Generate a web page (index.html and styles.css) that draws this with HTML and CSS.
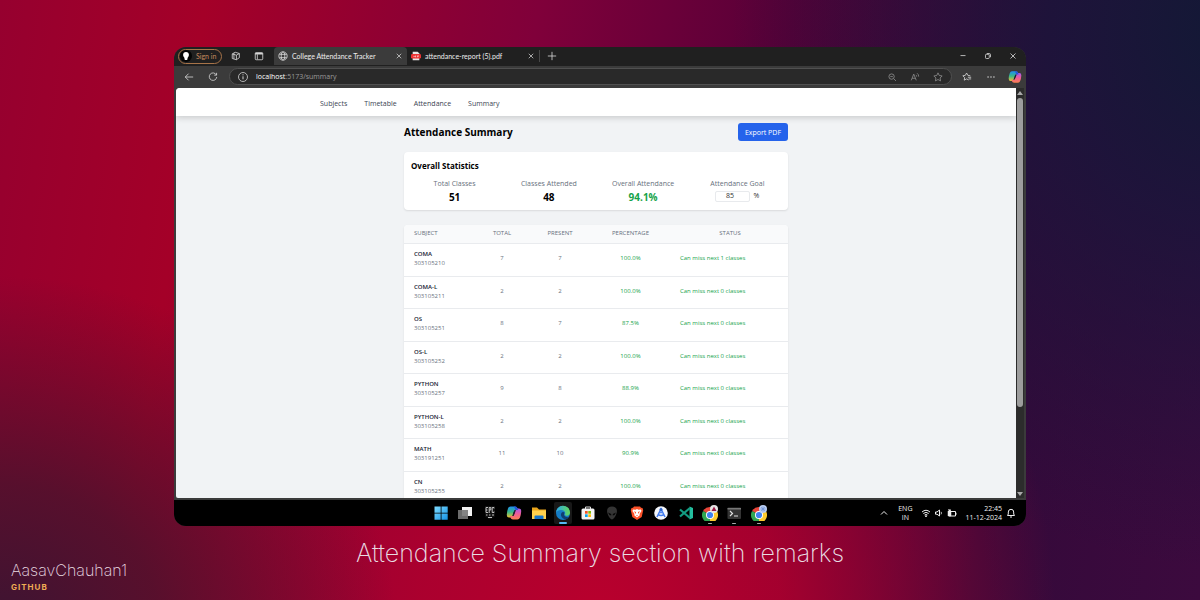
FILE: index.html
```html
<!DOCTYPE html>
<html lang="en">
<head>
<meta charset="utf-8">
<meta name="viewport" content="width=device-width, initial-scale=1">
<title>Attendance Summary section with remarks</title>
<link rel="stylesheet" href="styles.css">
</head>
<body class="stage">
<svg class="defs" aria-hidden="true">
  <defs>
    <linearGradient id="win" x1="0" y1="0" x2="1" y2="1"><stop offset="0" stop-color="#7fdcff"/><stop offset="1" stop-color="#1593e6"/></linearGradient>
    <linearGradient id="cpA" x1="0" y1="0" x2="0" y2="1"><stop offset="0" stop-color="#1f8ff0"/><stop offset=".5" stop-color="#38b889"/><stop offset="1" stop-color="#f2c230"/></linearGradient>
    <linearGradient id="cpB" x1="0" y1="0" x2="0" y2="1"><stop offset="0" stop-color="#a45af0"/><stop offset=".5" stop-color="#ee5c96"/><stop offset="1" stop-color="#fb8050"/></linearGradient>
    <linearGradient id="edgeA" x1="0" y1="0" x2="1" y2="0"><stop offset="0" stop-color="#2aa7e8"/><stop offset="1" stop-color="#63d95a"/></linearGradient>
    <symbol id="copilot" viewBox="0 0 16 16">
      <path d="M4.500 1.500H9q2 0 2.600 2l.4 1.500H9.500Q8.300 5 7.900 6.500L6.800 10.500Q6.200 12.500 4.200 12.500H3Q.6 12.500.8 9.500q.2-3.500 1.300-6.200.6-1.800 2.400-1.800z" fill="url(#cpA)"/>
      <path d="M11.500 14.500H7q-2 0-2.600-2L4 11h2.500q1.200 0 1.600-1.500l1.100-4q.6-2 2.600-2H13q2.400 0 2.200 3-.2 3.500-1.300 6.200-.6 1.800-2.400 1.800z" fill="url(#cpB)"/>
      <path d="M8.300 5.500 10 5 7.800 10.500 6.200 11z" fill="#1d2233"/>
      <path d="M8 1.500h1q2 0 2.600 2l.4 1.500H9.500z" fill="#2455d8"/>
    </symbol>
    <symbol id="chrome" viewBox="0 0 16 16">
      <path d="M8 8 1.070 4A8 8 0 0 1 14.930 4z" fill="#e8453a"/>
      <path d="M8 8 14.930 4A8 8 0 0 1 8 16z" fill="#fccb2f"/>
      <path d="M8 8v8A8 8 0 0 1 1.070 4z" fill="#30a652"/>
      <path d="M8 4h6.930L11.500 10 8 16 11 8z" fill="#fccb2f"/>
      <circle cx="8" cy="8" r="4" fill="#fff"/><circle cx="8" cy="8" r="3.100" fill="#3f83f0"/>
    </symbol>
    <symbol id="close" viewBox="0 0 8 8"><path d="M1 1l6 6M7 1 1 7" stroke="currentColor" fill="none"/></symbol>
    <symbol id="star" viewBox="0 0 12 12"><path d="M6 1l1.500 3.200 3.500.5-2.500 2.500.6 3.500L6 9l-3.100 1.700.6-3.500L1 4.700l3.500-.5z" fill="none" stroke="currentColor" stroke-linejoin="round"/></symbol>
  </defs>
</svg>

<main class="window">
  <header class="tabstrip">
    <button class="signin" type="button"><svg class="avatar" viewBox="0 0 12 12" aria-hidden="true"><circle cx="6" cy="6" r="6" fill="#050505"/><circle cx="6" cy="4.800" r="2.900" fill="#fff"/><path d="M4.200 7h3.600L7.200 10H4.800z" fill="#fff"/></svg>Sign in</button>
    <button class="icon-btn" type="button" aria-label="Workspaces"><svg viewBox="0 0 12 12"><g fill="none" stroke="currentColor"><path d="M1.500 3.500 5 1.500l5 1.500v5L6.500 10.500l-5-1.500zM1.500 3.500l5 1.500 3.500-2M6.500 5v5.500M3.500 2.500v7"/></g></svg></button>
    <button class="icon-btn" type="button" aria-label="Tab actions"><svg viewBox="0 0 12 12"><rect x="1.500" y="2" width="9" height="8.500" rx="1" fill="none" stroke="currentColor"/><path d="M1.500 3.200h9" stroke="currentColor" stroke-width="2"/><path d="M4 4v6" stroke="currentColor"/></svg></button>
    <div class="tab tab-active">
      <svg class="tab-icon" viewBox="0 0 12 12" aria-hidden="true"><g fill="none" stroke="#d5d5d5"><circle cx="6" cy="6" r="5"/><ellipse cx="6" cy="6" rx="2.200" ry="5"/><path d="M1.500 4h9M1.500 8h9"/></g></svg>
      <span class="tab-title">College Attendance Tracker</span>
      <button class="tab-close" type="button" aria-label="Close tab"><svg viewBox="0 0 8 8"><use href="#close"/></svg></button>
    </div>
    <div class="tab">
      <svg class="tab-icon" viewBox="0 0 12 12" aria-hidden="true"><path d="M3 1h5l2 2v8H2V1z" fill="#e9e5e5"/><rect x="0" y="3.500" width="12" height="5.500" rx="1.500" fill="#ed3434"/><path d="M3 6.500h1.500M5.500 5.500v2M8 5.500v2M8 6h1.500" stroke="#fff" stroke-width=".8"/></svg>
      <span class="tab-title">attendance-report (5).pdf</span>
      <button class="tab-close" type="button" aria-label="Close tab"><svg viewBox="0 0 8 8"><use href="#close"/></svg></button>
    </div>
    <button class="icon-btn new-tab" type="button" aria-label="New tab"><svg viewBox="0 0 12 12"><path d="M6 1v10M1 6h10" stroke="currentColor"/></svg></button>
    <div class="controls">
      <button class="icon-btn" type="button" aria-label="Minimize"><svg viewBox="0 0 12 12"><path d="M3 5.500h6" stroke="currentColor"/></svg></button>
      <button class="icon-btn" type="button" aria-label="Restore"><svg viewBox="0 0 12 12"><g fill="none" stroke="currentColor"><rect x="3" y="4" width="4.500" height="5" rx="1"/><path d="M4.500 3h3C8.500 3 9 3.500 9 4.500v3"/></g></svg></button>
      <button class="icon-btn" type="button" aria-label="Close window"><svg viewBox="0 0 12 12"><path d="M3 3l6 6M9 3 3 9" stroke="currentColor"/></svg></button>
    </div>
  </header>

  <div class="toolbar">
    <button class="icon-btn" type="button" aria-label="Back"><svg viewBox="0 0 12 12"><path d="M11 6H1.500M5.500 2 1.500 6l4 4" fill="none" stroke="currentColor"/></svg></button>
    <button class="icon-btn" type="button" aria-label="Refresh"><svg viewBox="0 0 12 12"><path d="M10 3.500A4.500 4.500 0 1 0 10.500 6M10.300 1v2.800H7.500" fill="none" stroke="currentColor"/></svg></button>
    <div class="address">
      <svg class="info" viewBox="0 0 12 12" aria-hidden="true"><circle cx="6" cy="6" r="4.500" fill="none" stroke="currentColor" stroke-width=".8"/><path d="M6 5.300v3M6 3.300v1" stroke="currentColor"/></svg>
      <span class="url"><b>localhost</b>:5173/summary</span>
      <button class="icon-btn dim" type="button" aria-label="Zoom"><svg viewBox="0 0 12 12"><g fill="none" stroke="currentColor"><circle cx="5.500" cy="5.500" r="3.200"/><path d="M8 8l2.700 2.700M4 5.500h3"/></g></svg></button>
      <button class="icon-btn dim" type="button" aria-label="Read aloud"><svg viewBox="0 0 12 12"><path d="M1.500 10 4.500 2.500l3 7.500M2.600 7.500h3.800M7 3.500q1 .6 1 2M8.500 1.500q1.900 1.400 1.900 4" fill="none" stroke="currentColor"/></svg></button>
      <button class="icon-btn dim" type="button" aria-label="Add to favorites"><svg viewBox="0 0 12 12"><use href="#star"/></svg></button>
    </div>
    <button class="icon-btn" type="button" aria-label="Favorites"><svg viewBox="0 0 12 12"><path d="M8 9.500 5.500 8.300l-2.800 1.500.5-3L1 4.500l3-.5 1.500-2.800L7 4l3 .5M7 6.300h4M8 8.300h3" fill="none" stroke="currentColor"/></svg></button>
    <button class="icon-btn" type="button" aria-label="More"><svg viewBox="0 0 12 12"><g fill="currentColor"><circle cx="2.500" cy="6" r=".9"/><circle cx="6" cy="6" r=".9"/><circle cx="9.500" cy="6" r=".9"/></g></svg></button>
    <button class="icon-btn copilot" type="button" aria-label="Copilot"><svg viewBox="0 0 16 16"><use href="#copilot"/></svg></button>
  </div>

  <div class="frame">
    <div class="page">
      <nav class="nav"><div class="nav-inner">
        <a href="#subjects">Subjects</a><a href="#timetable">Timetable</a><a href="#attendance">Attendance</a><a href="#summary">Summary</a>
      </div></nav>
      <div class="content" id="summary">
        <div class="heading"><h1>Attendance Summary</h1><button class="export" type="button">Export PDF</button></div>
        <section class="card stats">
          <h2>Overall Statistics</h2>
          <div class="stat-grid">
            <div class="stat"><span>Total Classes</span><strong>51</strong></div>
            <div class="stat"><span>Classes Attended</span><strong>48</strong></div>
            <div class="stat"><span>Overall Attendance</span><strong class="good">94.1%</strong></div>
            <div class="stat"><label for="goal">Attendance Goal</label><div class="goal"><input id="goal" type="text" inputmode="numeric" value="85"><span>%</span></div></div>
          </div>
        </section>
        <table class="card records">
          <colgroup><col class="c-subject"><col class="c-count"><col class="c-count"><col class="c-percent"><col></colgroup>
          <thead><tr><th>SUBJECT</th><th>TOTAL</th><th>PRESENT</th><th>PERCENTAGE</th><th>STATUS</th></tr></thead>
          <tbody>
            <tr><td><b>COMA</b>303105210</td><td>7</td><td>7</td><td>100.0%</td><td>Can miss next 1 classes</td></tr>
            <tr><td><b>COMA-L</b>303105211</td><td>2</td><td>2</td><td>100.0%</td><td>Can miss next 0 classes</td></tr>
            <tr><td><b>OS</b>303105251</td><td>8</td><td>7</td><td>87.5%</td><td>Can miss next 0 classes</td></tr>
            <tr><td><b>OS-L</b>303105252</td><td>2</td><td>2</td><td>100.0%</td><td>Can miss next 0 classes</td></tr>
            <tr><td><b>PYTHON</b>303105257</td><td>9</td><td>8</td><td>88.9%</td><td>Can miss next 0 classes</td></tr>
            <tr><td><b>PYTHON-L</b>303105258</td><td>2</td><td>2</td><td>100.0%</td><td>Can miss next 0 classes</td></tr>
            <tr><td><b>MATH</b>303191251</td><td>11</td><td>10</td><td>90.9%</td><td>Can miss next 0 classes</td></tr>
            <tr><td><b>CN</b>303105255</td><td>2</td><td>2</td><td>100.0%</td><td>Can miss next 0 classes</td></tr>
          </tbody>
        </table>
      </div>
    </div>
    <div class="scrollbar" aria-hidden="true"><svg viewBox="0 0 8 8"><path d="M4 2 7 6H1z" fill="#aaa"/></svg><span class="track"><span class="thumb"></span></span><svg viewBox="0 0 8 8"><path d="M4 6 7 2H1z" fill="#aaa"/></svg></div>
  </div>

  <footer class="taskbar">
    <div class="apps">
      <button type="button" aria-label="Start"><svg viewBox="0 0 16 16"><path d="M1.500 1.500h6.200v6.200H1.500zM8.500 1.500h6.200v6.200H8.500zM1.500 8.500h6.200v6.200H1.500zM8.500 8.500h6.200v6.200H8.500z" fill="url(#win)"/></svg></button>
      <button type="button" aria-label="Task view"><svg viewBox="0 0 16 16"><rect x="5" y="2" width="10" height="9" fill="#f1f1f1"/><rect x="1" y="5" width="10" height="9" fill="#777" fill-opacity=".9"/></svg></button>
      <button type="button" aria-label="Game launcher"><svg viewBox="0 0 16 16"><path d="M3 1h10v10.500L8 14.500l-5-3z" fill="#111"/><path d="M6 2.500H4v5h2M4 5h1.500M7.200 8V2.500h1.600V5H7.200M12 3.500v-1h-1.800v5H12v-1M4 10h1.500M7 10h1.500M10 10h2M6 12.500h4" fill="none" stroke="#d0d0d0" stroke-width=".9"/></svg></button>
      <button type="button" aria-label="Copilot app"><svg viewBox="0 0 16 16"><use href="#copilot"/></svg></button>
      <button type="button" aria-label="File Explorer"><svg viewBox="0 0 16 16"><path d="M1 2.500h5l2 2h7V14H1z" fill="#e9a51c"/><path d="M1 5.500h14V14H1z" fill="#ffd04c"/><path d="M3.500 14v-2.500q0-1 1-1h7q1 0 1 1V14z" fill="#1675c9"/></svg></button>
      <button class="current" type="button" aria-label="Edge"><svg viewBox="0 0 16 16"><circle cx="8" cy="8" r="7" fill="#147cc5"/><path d="M1 8a7 7 0 0 1 14-.5c.1 2.400-2 3.300-3.800 3.300-1.500 0-2-.8-1.300-1.700C11 6.500 8.500 5 6 5S1.500 6 1 8z" fill="url(#edgeA)"/><path d="M9.500 7.500C7.500 6 5.500 8 6 10.500S9 14.500 11 14.300c1.500-.3 2.700-1.400 3.300-2.500-3 1.200-6.300-.8-4.800-4.300z" fill="#103e72"/></svg></button>
      <button type="button" aria-label="Store"><svg viewBox="0 0 16 16"><path d="M5.500 4V2h5v2" fill="none" stroke="#ddd"/><rect x="1.500" y="3.500" width="13" height="11" rx="1.500" fill="#f3f3f3"/><path d="M5 6h2.700v2.700H5z" fill="#f35325"/><path d="M8.300 6H11v2.700H8.300z" fill="#81bc06"/><path d="M5 9.300h2.700V12H5z" fill="#05a6f0"/><path d="M8.300 9.300H11V12H8.300z" fill="#ffba08"/></svg></button>
      <button type="button" aria-label="Alien app"><svg viewBox="0 0 16 16"><path d="M8 1.500c3.500 0 5.200 2.200 4.900 5.200C12.600 10 9.500 14.500 8 14.500S3.400 10 3.100 6.700C2.800 3.700 4.500 1.500 8 1.500z" fill="#343434"/><path d="M4 7.500 7.200 9v1.500Q4.800 10 4 7.500zM12 7.500 8.800 9v1.500Q11.200 10 12 7.500z" fill="#050505"/></svg></button>
      <button type="button" aria-label="Brave"><svg viewBox="0 0 16 16"><path d="M5 1.500h6l1 1.200 1.500.2.700 2.300L12.700 12 8 15 3.300 12 1.800 5.200l.7-2.300L4 2.700z" fill="#fb5128"/><path d="m4 4.500 2.500.3L8 4l1.500.8 2.500-.3.500 1.500-2 3 .3 1.200L8 12.500l-2.800-2.300.3-1.200-2-3z" fill="#fff"/><path d="m5 6.300 2 .8L6.700 9zM11 6.300l-2 .8.300 1.900zM7 10h2l-1 1z" fill="#fb5128"/></svg></button>
      <button type="button" aria-label="Android Studio"><svg viewBox="0 0 16 16"><circle cx="8" cy="8" r="6.800" fill="#f5f7fc"/><path d="M4 12 8 4l4 8M5 9.500q3 2 6 0" fill="none" stroke="#437df0" stroke-width="1.600"/><circle cx="8" cy="4.500" r="1.500" fill="#2b62c9"/><circle cx="8" cy="7.500" r="1" fill="#437df0"/></svg></button>
      <button type="button" aria-label="Code editor"><svg viewBox="0 0 16 16"><path d="M11.500 1.500 15 3v10l-3.500 1.500z" fill="#24c0a0"/><path d="M12 3 2 11.500M12 13 2 4.500" stroke="#139b82" stroke-width="2.200"/></svg></button>
      <button class="running" type="button" aria-label="Chrome"><svg viewBox="0 0 16 16"><svg x="0" y="2" width="13.500" height="13.500" viewBox="0 0 16 16"><use href="#chrome"/></svg><circle cx="12" cy="4" r="4" fill="#e5e5e5"/><path d="m12 1.500 2.500 4.500h-5z" fill="#9b1745"/></svg></button>
      <button class="running" type="button" aria-label="Terminal"><svg viewBox="0 0 16 16"><rect x="1.500" y="2.500" width="13.500" height="11.500" rx="1" fill="#343434"/><path d="M1.500 3h13.500v1.500H1.500z" fill="#777"/><path d="m4 6 2.500 2.500L4 11M8 11h4" fill="none" stroke="#e2e2e2" stroke-width="1.200"/></svg></button>
      <button class="running" type="button" aria-label="Chrome profile"><svg viewBox="0 0 16 16"><svg x="0" y="2" width="13.500" height="13.500" viewBox="0 0 16 16"><use href="#chrome"/></svg><circle cx="12" cy="4" r="4" fill="#b9cdf2"/><path d="M9.500 4h5M12 1.500v5M10.200 2.200l3.600 3.600M13.800 2.200l-3.600 3.600" stroke="#6f92d4" stroke-width=".8"/></svg></button>
    </div>
    <div class="tray">
      <svg viewBox="0 0 10 10" aria-hidden="true"><path d="M2 6.500 5 3.500l3 3" fill="none" stroke="currentColor"/></svg>
      <span class="lang">ENG<br>IN</span>
      <div class="status-icons">
        <svg viewBox="0 0 10 10" aria-hidden="true"><g fill="none" stroke="currentColor"><path d="M1 4q4-3.500 8 0M2.300 5.500q2.700-2.300 5.400 0M3.600 7q1.400-1 2.800 0"/></g><circle cx="5" cy="8.200" r=".9" fill="currentColor"/></svg>
        <svg viewBox="0 0 10 10" aria-hidden="true"><path d="M1.500 4H3l2.500-2v6L3 6.200H1.500z" fill="none" stroke="currentColor"/><path d="M7 3.800q1 1.200 0 2.600" fill="none" stroke="currentColor" stroke-width=".8"/></svg>
        <svg viewBox="0 0 10 10" aria-hidden="true"><path d="M2 3.500h6.500V8H2zM9 4.800v2" fill="none" stroke="currentColor"/><path d="M1 1.500h1v1.500h1.500V1.500M1 3h3v5H1z" fill="currentColor" stroke="currentColor" stroke-width=".5"/></svg>
      </div>
      <time class="clock" datetime="2024-12-11T22:45">22:45<br>11-12-2024</time>
      <svg viewBox="0 0 10 10" aria-hidden="true"><path d="M1.500 7.500h7L7.700 6V4A2.700 2.700 0 0 0 2.300 4v2zM4 9h2" fill="none" stroke="currentColor"/></svg>
    </div>
  </footer>
</main>

<footer class="captions">
  <div class="credit"><span class="author">AasavChauhan1</span><span class="source">GITHUB</span></div>
  <p class="caption">Attendance Summary section with remarks</p>
</footer>
</body>
</html>
```

FILE: styles.css
```css
* { box-sizing: border-box; }

.stage {
  margin: 0;
  height: 100vh;
  padding-top: 47px;
  display: flex;
  flex-direction: column;
  align-items: center;
  overflow: hidden;
  font-family: "Open Sans", "Noto Sans", sans-serif;
  background:
    radial-gradient(ellipse 42% 90% at 103% 5%, #121935 0%, #18163acc 35%, #18163a00 100%),
    radial-gradient(ellipse 33% 58% at 0% 104%, #3d1432 0%, #4b122dd9 40%, #5a101e00 100%),
    radial-gradient(ellipse 38% 90% at 50% 105%, #ba002d 0%, #b0002de0 40%, #a8002b00 100%),
    linear-gradient(98deg, #96002f 0%, #a40028 16%, #80003a 42%, #560038 62%, #34093a 82%, #3c0a3e 100%);
}

.defs { position: absolute; width: 0; height: 0; }

button, input { font: inherit; color: inherit; }
button { border: 0; padding: 0; background: none; }
svg { display: block; }

/* Browser window */
.window {
  width: 71%;
  flex: 1;
  min-height: 0;
  display: flex;
  flex-direction: column;
  overflow: hidden;
  border-radius: 12px;
  background: #3b3b3b;
  color: #d4d4d4;
}

.icon-btn { width: 12px; height: 12px; flex: none; }
.icon-btn svg { width: 10px; height: 10px; margin: auto; }
.dim { color: #8c8c8c; }

.tabstrip {
  height: 19px;
  flex: none;
  display: flex;
  align-items: center;
  padding: 0 0 1px 4px;
  background: #202020;
  font-size: 7px;
}
.tabstrip > .icon-btn { margin-left: 8px; }
.tabstrip > .icon-btn + .icon-btn { margin-left: 11px; }
.signin {
  width: 44px;
  height: 15px;
  display: flex;
  align-items: center;
  gap: 4px;
  padding-left: 1px;
  border: 1px solid #a77449;
  border-radius: 8px;
  color: #c58a5d;
  font-family: Lato, sans-serif;
  white-space: nowrap;
}
.avatar { width: 12px; height: 12px; }

.tab {
  width: 133px;
  height: 18px;
  display: flex;
  align-items: center;
  gap: 4px;
  padding: 0 4px;
  border-radius: 4px 4px 0 0;
}
.tab-active { margin-left: 9px; background: #3b3b3b; }
.tab-icon { width: 10px; height: 10px; }
.tab-title { flex: 1; white-space: nowrap; font-family: Lato, sans-serif; font-size: 7px; color: #ededed; }
.tab-close { width: 8px; }
.tab-close svg { width: 6px; height: 6px; margin: auto; }
.tabstrip > .new-tab { margin-left: 6px; }
.tab-active + .tab { border-right: 1px solid #484848; border-radius: 0; height: 12px; }
.controls { display: flex; gap: 13px; margin-left: auto; padding-right: 7px; }

.toolbar {
  height: 21px;
  flex: none;
  display: flex;
  align-items: center;
  gap: 12px;
  padding: 0 5px 0 9px;
}
.address {
  flex: 1;
  height: 17px;
  display: flex;
  align-items: center;
  gap: 11px;
  margin: 0 -3px 0 -2px;
  padding: 0 7px;
  border: 1px solid #505050;
  border-radius: 9px;
  background: #292929;
}
.info { width: 12px; height: 12px; }
.url { flex: 1; margin-left: -4px; font-size: 7px; color: #999; }
.url b { font-weight: 400; color: #fff; }
.toolbar .copilot svg { width: 14px; height: 14px; margin: -1px; }

/* Viewport */
.frame {
  flex: 1;
  min-height: 0;
  display: flex;
  margin: 1px 2px 2px;
}
.page {
  flex: 1;
  overflow: hidden;
  border-radius: 4px 0 0 2px;
  background: #f1f3f5;
  color: #111;
}
.scrollbar {
  width: 8px;
  display: flex;
  flex-direction: column;
  padding-top: 1px;
  background: #2c2c2c;
}
.scrollbar svg { width: 8px; height: 8px; }
.track { flex: 1; padding: 1px; }
.thumb { display: block; height: 79%; border-radius: 3px; background: #9d9d9d; }

.nav { background: #fff; box-shadow: 0 2px 6px #00000029; }
.nav-inner {
  max-width: 552px;
  height: 28px;
  margin: 0 auto;
  display: flex;
  align-items: center;
  gap: 17px;
  padding-top: 2px;
  font-size: 7px;
}
.nav a { color: #3a4452; text-decoration: none; }

.content { max-width: 384px; margin: 0 auto; padding-top: 7px; }
.heading { display: flex; justify-content: space-between; align-items: center; }
.heading h1 { margin: 0; font-size: 10px; line-height: 18px; color: #000; }
.export {
  height: 18px;
  padding: 0 7px;
  border-radius: 3px;
  background: #2563eb;
  color: #fff;
  font-size: 7px;
}

.card { background: #fff; border-radius: 4px; box-shadow: 0 1px 2px #0000001a; }
.stats { margin-top: 11px; padding: 7px 7px 6px; }
.stats h2 { margin: 0 0 6px; font-size: 8px; line-height: 13px; color: #000; }
.stat-grid { display: grid; grid-template-columns: repeat(4, 1fr); gap: 7px; }
.stat { display: flex; flex-direction: column; align-items: center; font-size: 7px; line-height: 12px; color: #67707d; }
.stat strong { font-size: 10px; line-height: 14px; color: #000; }
.stat .good { color: #16a34a; }
.goal { display: flex; align-items: center; gap: 3px; color: #333; }
.goal input {
  width: 35px;
  height: 11px;
  padding: 0 6px 0 0;
  border: 1px solid #e8eaed;
  border-radius: 2px;
  background: #fff;
  text-align: center;
}

.records {
  width: 100%;
  margin-top: 15px;
  table-layout: fixed;
  border-collapse: collapse;
  overflow: hidden;
  font-size: 6px;
  line-height: 9px;
}
.c-subject { width: 69px; }
.c-count { width: 58px; }
.c-percent { width: 83px; }
.records th { height: 18px; padding: 0; background: #f9fafb; color: #67707d; font-weight: 400; }
.records td { padding: 6px 0 7px; border-top: 1px solid #e9ebee; text-align: center; color: #6b7280; }
.records tr:nth-child(odd) td { padding-bottom: 8px; }
.records th:first-child, .records td:first-child { padding-left: 10px; text-align: left; }
.records b { display: block; color: #182234; font-weight: 600; }
.records td:nth-child(n+4) { color: #16a34a; }
.records td:last-child { padding-left: 8px; text-align: left; }

/* Taskbar */
.taskbar {
  height: 26px;
  flex: none;
  display: grid;
  grid-template-columns: 1fr 336px 1fr;
  align-items: center;
  background: #000;
}
.apps { grid-column: 2; display: flex; justify-content: space-between; }
.apps button { position: relative; width: 18px; height: 22px; border-radius: 2px; }
.apps svg { width: 16px; height: 16px; margin: 0 auto; }
.apps .current { background: #181818; }
.apps .current::after, .apps .running::after {
  content: "";
  position: absolute;
  left: 50%;
  bottom: 0;
  width: 8px;
  height: 2px;
  border-radius: 1px;
  background: #55b9f2;
  transform: translateX(-50%);
}
.apps .running::after { width: 4px; height: 1px; background: #aaa; }
.tray {
  display: flex;
  align-items: center;
  justify-content: flex-end;
  padding-right: 10px;
  font-size: 7px;
  line-height: 9px;
  color: #eee;
}
.tray svg { width: 10px; height: 10px; }
.lang { margin: 0 9px; text-align: center; }
.status-icons { display: flex; gap: 3px; margin-right: 8px; }
.clock { margin-right: 4px; text-align: right; }

/* Captions under the window */
.captions {
  width: 100%;
  height: 74px;
  flex: none;
  display: grid;
  grid-template-columns: 1fr auto 1fr;
  font-family: Inter, Lato, sans-serif;
  color: #e9dce2;
}
.caption { margin: 12px 0 0; font-size: 25px; line-height: 30px; font-weight: 200; }
.credit { display: flex; flex-direction: column; align-self: end; padding: 0 0 8px 11px; }
.author { font-size: 16px; line-height: 20px; font-weight: 200; }
.source { margin-top: 2px; font-size: 8px; line-height: 10px; font-weight: 700; letter-spacing: 1px; color: #f0ad55; }
```
